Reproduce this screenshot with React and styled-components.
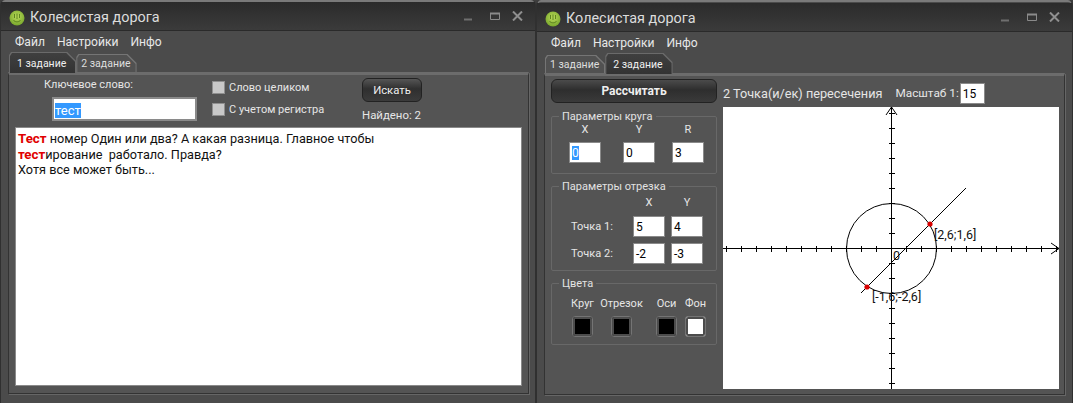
import React from "react";
import styled, { createGlobalStyle } from "styled-components";

const GlobalStyle = createGlobalStyle`
  html, body {
    margin: 0;
    padding: 0;
    background: #3f3f3f;
  }
  body {
    font-family: Roboto, "Liberation Sans", Arial, sans-serif;
    font-size: 11px;
    color: #e6e6e6;
  }
`;

const tabs = ["1 задание", "2 задание"];
const menu = ["Файл", "Настройки", "Инфо"];

function Logo() {
  return (
    <svg width="16" height="16" viewBox="0 0 16 16">
      <defs>
        <radialGradient id="leaf" cx="50%" cy="40%" r="62%">
          <stop offset="0%" stopColor="#bcdc5c" />
          <stop offset="100%" stopColor="#76a52a" />
        </radialGradient>
      </defs>
      <circle cx="8" cy="8" r="7.5" fill="url(#leaf)" />
      <path d="M5.5 4v4M8 3.5v5.5M10.5 4v4M4.5 10c1 2.5 6 2.5 7 0" fill="none" stroke="#5d8420" strokeWidth="1" />
    </svg>
  );
}

function WindowButtons() {
  return (
    <Controls>
      <MinIcon width="8" height="10" viewBox="0 0 8 10">
        <path d="M0 8.5h8" stroke="#6f6f6f" strokeWidth="2" />
      </MinIcon>
      <svg width="10" height="9" viewBox="0 0 10 9">
        <path d="M.5 1.5h9v6h-9z" fill="none" stroke="#8a8a8a" />
        <path d="M0 1.5h10" stroke="#8a8a8a" strokeWidth="2" />
      </svg>
      <svg width="11" height="10" viewBox="0 0 11 10">
        <path d="M1 .5l9 9M10 .5l-9 9" stroke="#8f8f8f" strokeWidth="2" />
      </svg>
    </Controls>
  );
}

function AppWindow({ active, second, children }) {
  return (
    <Frame $second={second}>
      <TitleBar>
        <Logo />
        <Title>Колесистая дорога</Title>
        <WindowButtons />
      </TitleBar>
      <Menu>
        {menu.map((item) => (
          <span key={item}>{item}</span>
        ))}
      </Menu>
      <TabStrip>
        {tabs.map((tab, i) => (
          <Tab key={tab} $active={i === active}>
            <TabFace $active={i === active}>{tab}</TabFace>
          </Tab>
        ))}
      </TabStrip>
      <Panel>{children}</Panel>
    </Frame>
  );
}

function Chart() {
  const cx = 168;
  const cy = 141;
  const ticksX = [];
  const ticksY = [];
  for (let x = cx % 15; x < 336; x += 15) ticksX.push(x);
  for (let y = cy % 15; y < 282; y += 15) ticksY.push(y);
  return (
    <Plot width="336" height="282" viewBox="0 0 336 282">
      <rect width="336" height="282" fill="#fff" />
      <g stroke="#000" strokeWidth="1" fill="none" shapeRendering="crispEdges">
        <path d={`M0 ${cy + 0.5}H336M${cx + 0.5} 0V282`} />
        {ticksX.map((x) => (
          <path key={x} d={`M${x + 0.5} ${cy - 2}V${cy + 4}`} />
        ))}
        {ticksY.map((y) => (
          <path key={y} d={`M${cx - 2} ${y + 0.5}H${cx + 4}`} />
        ))}
      </g>
      <g stroke="#000" strokeWidth="1" fill="none">
        <path d={`M${cx - 5} 8L${cx + 0.5} 0L${cx + 6} 8`} />
        <path d={`M328 ${cy - 5}L336 ${cy + 0.5}L328 ${cy + 6}`} />
        <circle cx={cx + 0.5} cy={cy + 0.5} r="45" />
        <path d={`M${cx + 75} ${cy - 60}L${cx - 30} ${cy + 45}`} />
      </g>
      <circle cx={cx + 39} cy={cy - 24} r="2.6" fill="#d80000" />
      <circle cx={cx - 24} cy={cy + 39} r="2.6" fill="#d80000" />
      <PlotLabel x={cx + 2} y={cy + 12}>0</PlotLabel>
      <PlotLabel x={cx + 43} y={cy - 9}>[2,6;1,6]</PlotLabel>
      <PlotLabel x={cx - 19} y={cy + 53}>[-1,6;-2,6]</PlotLabel>
    </Plot>
  );
}

function SearchTab() {
  return (
    <SearchBody>
      <SearchBar>
        <KeywordBox>
          <KeywordLabel>Ключевое слово:</KeywordLabel>
          <KeywordField>
            <Selected>тест</Selected>
          </KeywordField>
        </KeywordBox>
        <Checks>
          <CheckRow><CheckBox />Слово целиком</CheckRow>
          <CheckRow><CheckBox />С учетом регистра</CheckRow>
        </Checks>
        <SearchActions>
          <SearchButton>Искать</SearchButton>
          <span>Найдено: 2</span>
        </SearchActions>
      </SearchBar>
      <TextArea>
        <Hit>Тест</Hit> номер Один или два? А какая разница. Главное чтобы
        <br />
        <Hit>тест</Hit>ирование&nbsp; работало. Правда?
        <br />
        Хотя все может быть...
      </TextArea>
    </SearchBody>
  );
}

function CircleTab() {
  return (
    <CircleBody>
      <Sidebar>
        <CalcButton>Рассчитать</CalcButton>
        <Group $height={64}>
          <Legend>Параметры круга</Legend>
          <FieldRow $left={17}>
            <Column>
              <Head>X</Head>
              <Field><Selected>0</Selected></Field>
            </Column>
            <Column $gap={22}>
              <Head>Y</Head>
              <Field>0</Field>
            </Column>
            <Column $gap={17}>
              <Head>R</Head>
              <Field>3</Field>
            </Column>
          </FieldRow>
        </Group>
        <Group $height={91}>
          <Legend>Параметры отрезка</Legend>
          <SegmentGrid>
            <span />
            <Head>X</Head>
            <Head>Y</Head>
            <RowLabel>Точка 1:</RowLabel>
            <Field>5</Field>
            <Field>4</Field>
            <RowLabel>Точка 2:</RowLabel>
            <Field>-2</Field>
            <Field>-3</Field>
          </SegmentGrid>
        </Group>
        <Group $height={68}>
          <Legend>Цвета</Legend>
          <FieldRow $left={20} $top={7}>
            <Column $narrow>
              <Head>Круг</Head>
              <Swatch />
            </Column>
            <Column $narrow $gap={18}>
              <Head>Отрезок</Head>
              <Swatch />
            </Column>
            <Column $narrow $gap={24}>
              <Head>Оси</Head>
              <Swatch />
            </Column>
            <Column $narrow $gap={8}>
              <Head>Фон</Head>
              <Swatch $color="#fff" />
            </Column>
          </FieldRow>
        </Group>
      </Sidebar>
      <PlotColumn>
        <PlotHeader>
          <span>2 Точка(и/ек) пересечения</span>
          <ScaleLabel>Масштаб 1:</ScaleLabel>
          <ScaleField>15</ScaleField>
        </PlotHeader>
        <Chart />
      </PlotColumn>
    </CircleBody>
  );
}

export default function App() {
  return (
    <>
      <GlobalStyle />
      <Desktop>
        <AppWindow active={0}>
          <SearchTab />
        </AppWindow>
        <AppWindow active={1} second>
          <CircleTab />
        </AppWindow>
      </Desktop>
    </>
  );
}

const Desktop = styled.div`
  display: flex;
  width: 1073px;
  height: 403px;
  overflow: hidden;
`;

const Frame = styled.div`
  width: ${(p) => (p.$second ? 537 : 536)}px;
  padding-top: ${(p) => (p.$second ? 1 : 0)}px;
  height: 403px;
  box-sizing: border-box;
  display: flex;
  flex-direction: column;
  background: #4b4b4b;
  border-left: 1px solid #303030;
  border-right: 1px solid #303030;
  box-shadow: inset 0 2px 0 #7a7a7a;
  border-radius: 5px 5px 0 0;
`;

const TitleBar = styled.div`
  height: 29px;
  margin-top: 2px;
  padding: 3px 12px 0 8px;
  display: flex;
  align-items: center;
  gap: 5px;
  background: linear-gradient(#2b2b2b, #3b3b3b);
  border-bottom: 1px solid #2a2a2a;
  box-sizing: border-box;
`;

const Title = styled.div`
  flex: 1;
  font-size: 14.4px;
  color: #dcdcdc;
`;

const Controls = styled.div`
  display: flex;
  align-items: center;
  gap: 12px;
  margin-top: -3px;
`;

const MinIcon = styled.svg`
  margin-right: 6px;
`;

const Menu = styled.div`
  height: 21px;
  padding: 0 14px;
  display: flex;
  align-items: center;
  gap: 12px;
  font-size: 12.1px;
  color: #e8e8e8;
`;

const TabStrip = styled.div`
  height: 20px;
  padding-left: 8px;
  display: flex;
  align-items: flex-end;
`;

const Tab = styled.div`
  height: ${(p) => (p.$active ? 21 : 18)}px;
  padding: 1px 1px 0;
  margin-bottom: ${(p) => (p.$active ? -1 : 0)}px;
  position: relative;
  z-index: ${(p) => (p.$active ? 1 : 0)};
  background: ${(p) => (p.$active ? "#6a6a6a" : "#757575")};
  clip-path: polygon(0 3px, 2px 0, calc(100% - 9px) 0, 100% 9px, 100% 100%, 0 100%);
  box-sizing: border-box;
`;

const TabFace = styled.div`
  height: 100%;
  padding: 0 ${(p) => (p.$active ? 9 : 5)}px 0 ${(p) => (p.$active ? 7 : 4)}px;
  display: flex;
  align-items: center;
  font-size: 10.5px;
  white-space: nowrap;
  color: ${(p) => (p.$active ? "#f0f0f0" : "#dedede")};
  background: ${(p) => (p.$active ? "linear-gradient(#3f3f3f, #333)" : "#515151")};
  clip-path: polygon(0 3px, 2px 0, calc(100% - 9px) 0, 100% 9px, 100% 100%, 0 100%);
`;

const Panel = styled.div`
  width: 521px;
  height: 322px;
  margin-left: 7px;
  box-sizing: border-box;
  background: #545454;
  border: 1px solid #333;
  border-top: 3px solid #6c6c6c;
  box-shadow: 1px 1px 0 #666;
`;

const SearchBody = styled.div`
  height: 100%;
  display: flex;
  flex-direction: column;
  padding: 3px 5px 0 6px;
  box-sizing: border-box;
`;

const SearchBar = styled.div`
  height: 49px;
  display: flex;
`;

const KeywordBox = styled.div`
  width: 197px;
  padding-left: 29px;
  box-sizing: border-box;
`;

const KeywordLabel = styled.div`
  height: 16px;
`;

const KeywordField = styled.div`
  width: 145px;
  height: 24px;
  margin: 3px 0 0 8px;
  padding: 4px 1px 0;
  box-sizing: border-box;
  background: #fff;
  border: 2px solid #8a8a8a;
  color: #000;
  font-size: 13px;
  line-height: 15px;
`;

const Selected = styled.span`
  background: #3399ff;
  color: #fff;
`;

const Checks = styled.div`
  width: 150px;
  padding-top: 2px;
  display: flex;
  flex-direction: column;
  gap: 8px;
`;

const CheckRow = styled.label`
  display: flex;
  align-items: center;
  gap: 4px;
  height: 14px;
`;

const CheckBox = styled.span`
  width: 11px;
  height: 11px;
  background: #c8c8c8;
  border: 1px solid #8f8f8f;
`;

const SearchActions = styled.div`
  display: flex;
  flex-direction: column;
  align-items: flex-start;
  gap: 6px;
  font-size: 11.4px;
`;

const SearchButton = styled.button`
  width: 60px;
  height: 24px;
  padding: 0;
  border: 1px solid #222;
  border-radius: 6px;
  background: linear-gradient(#555, #2f2f2f 45%, #3b3b3b);
  color: #eee;
  font: inherit;
  font-size: 11.3px;
`;

const TextArea = styled.div`
  width: 507px;
  height: 259px;
  padding: 3px 2px;
  box-sizing: border-box;
  background: #fff;
  border: 1px solid #8a8a8a;
  color: #111;
  font-size: 12.7px;
  line-height: 15.5px;
`;

const Hit = styled.b`
  color: #e00000;
  font-size: 13.3px;
`;

const CircleBody = styled.div`
  height: 100%;
  display: flex;
  gap: 6px;
  padding: 3px 0 0 6px;
  box-sizing: border-box;
`;

const Sidebar = styled.div`
  width: 166px;
  display: flex;
  flex-direction: column;
`;

const CalcButton = styled.button`
  height: 24px;
  margin-bottom: 7px;
  padding: 0;
  border: 1px solid #222;
  border-radius: 6px;
  background: linear-gradient(#4b4b4b, #2e2e2e 45%, #3a3a3a);
  color: #eee;
  font: inherit;
  font-weight: bold;
  font-size: 12px;
`;

const Group = styled.fieldset`
  height: ${(p) => p.$height}px;
  margin: 0 0 6px;
  padding: 0;
  box-sizing: border-box;
  border: 1px solid #686868;
  border-radius: 2px;
  min-width: 0;
`;

const Legend = styled.legend`
  margin-left: 7px;
  padding: 0 3px;
  line-height: 13px;
  font-size: 11px;
  color: #e2e2e2;
`;

const Head = styled.div`
  text-align: center;
  line-height: 14px;
  white-space: nowrap;
`;

const Field = styled.div`
  height: 21px;
  padding: 3px 2px 0;
  box-sizing: border-box;
  background: #fff;
  border: 1px solid #8a8a8a;
  color: #000;
  font-size: 12px;
  line-height: 14px;
`;

const FieldRow = styled.div`
  display: flex;
  padding: ${(p) => p.$top || 0}px 0 0 ${(p) => p.$left}px;
`;

const Column = styled.div`
  width: ${(p) => (p.$narrow ? 21 : 32)}px;
  margin-left: ${(p) => p.$gap || 0}px;
  display: flex;
  flex-direction: column;
  align-items: ${(p) => (p.$narrow ? "center" : "stretch")};
  gap: 5px;
`;

const SegmentGrid = styled.div`
  display: grid;
  grid-template-columns: 56px 32px 32px;
  gap: 6px;
  padding: 3px 0 0 19px;
`;

const RowLabel = styled.div`
  line-height: 21px;
`;

const Swatch = styled.div`
  width: 21px;
  height: 21px;
  flex: none;
  box-sizing: border-box;
  border: 1px solid #747474;
  box-shadow: inset 0 0 0 2px #4c4c4c;
  border-radius: 3px;
  background: ${(p) => p.$color || "#000"};
`;

const PlotColumn = styled.div`
  display: flex;
  flex-direction: column;
`;

const PlotHeader = styled.div`
  height: 28px;
  display: flex;
  align-items: center;
  font-size: 12.7px;
`;

const ScaleLabel = styled.span`
  margin-left: 13px;
  margin-right: 1px;
  font-size: 11.8px;
`;

const ScaleField = styled(Field)`
  width: 25px;
`;

const Plot = styled.svg`
  display: block;
`;

const PlotLabel = styled.text`
  font-family: Roboto, "Liberation Sans", Arial, sans-serif;
  font-size: 12.5px;
  fill: #111;
`;
